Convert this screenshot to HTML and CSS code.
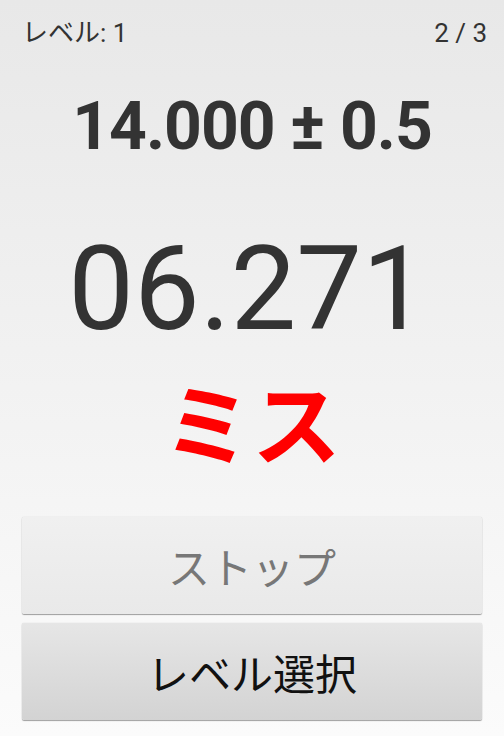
FILE: index.html
```html
<!DOCTYPE html>
<html>

<head>
	<meta charset="UTF-8">
	<title>タイマー</title>
	<meta name="viewport" content="width=device-width, initial-scale=1.0">
	<link rel="stylesheet" href="styles.css">
</head>

<body>
	<div class="screen">
		<div class="status">
			<span>レベル: 1</span>
			<span>2 / 3</span>
		</div>
		<div class="target">14.000 ± 0.5</div>
		<div class="time">06.271</div>
		<div class="result">ミス</div>
		<div class="buttons">
			<button class="btn btn-stop" disabled>ストップ</button>
			<button class="btn btn-level">レベル選択</button>
		</div>
	</div>
</body>

</html>
```

FILE: styles.css
```css
html,
body {
	margin: 0;
	height: 100%;
}

body {
	font-family: Roboto, "Noto Sans CJK JP", sans-serif;
	color: #333;
	background: linear-gradient(#e8e8e8, #fbfbfb);
}

.screen {
	display: flex;
	flex-direction: column;
	height: 100%;
	padding: 20px 22px 16px;
	box-sizing: border-box;
}

.status {
	display: flex;
	justify-content: space-between;
	margin-right: -5px;
	font-size: 26px;
	line-height: 1;
}

.target {
	margin-top: 48px;
	text-align: center;
	font-size: 66px;
	font-weight: bold;
	letter-spacing: -1px;
	line-height: 1;
}

.time {
	margin-top: 71px;
	text-align: center;
	font-size: 117px;
	line-height: 1;
	padding-right: 8px;
}

.result {
	margin-top: 35px;
	text-align: center;
	font-size: 89px;
	font-weight: bold;
	line-height: 1;
	color: #f00;
}

.buttons {
	margin-top: auto;
	display: flex;
	flex-direction: column;
	gap: 9px;
}

.btn {
	height: 97px;
	border: none;
	border-radius: 2px;
	font-family: inherit;
	font-size: 42px;
	box-shadow: 0 1px 1px rgba(0, 0, 0, 0.35), 0 0 1px rgba(0, 0, 0, 0.25);
}

.btn-stop {
	color: #777;
	background: linear-gradient(#f0f0f0, #e9e9e9);
}

.btn-level {
	color: #111;
	background: linear-gradient(#e6e6e6, #d3d3d3);
}
```
